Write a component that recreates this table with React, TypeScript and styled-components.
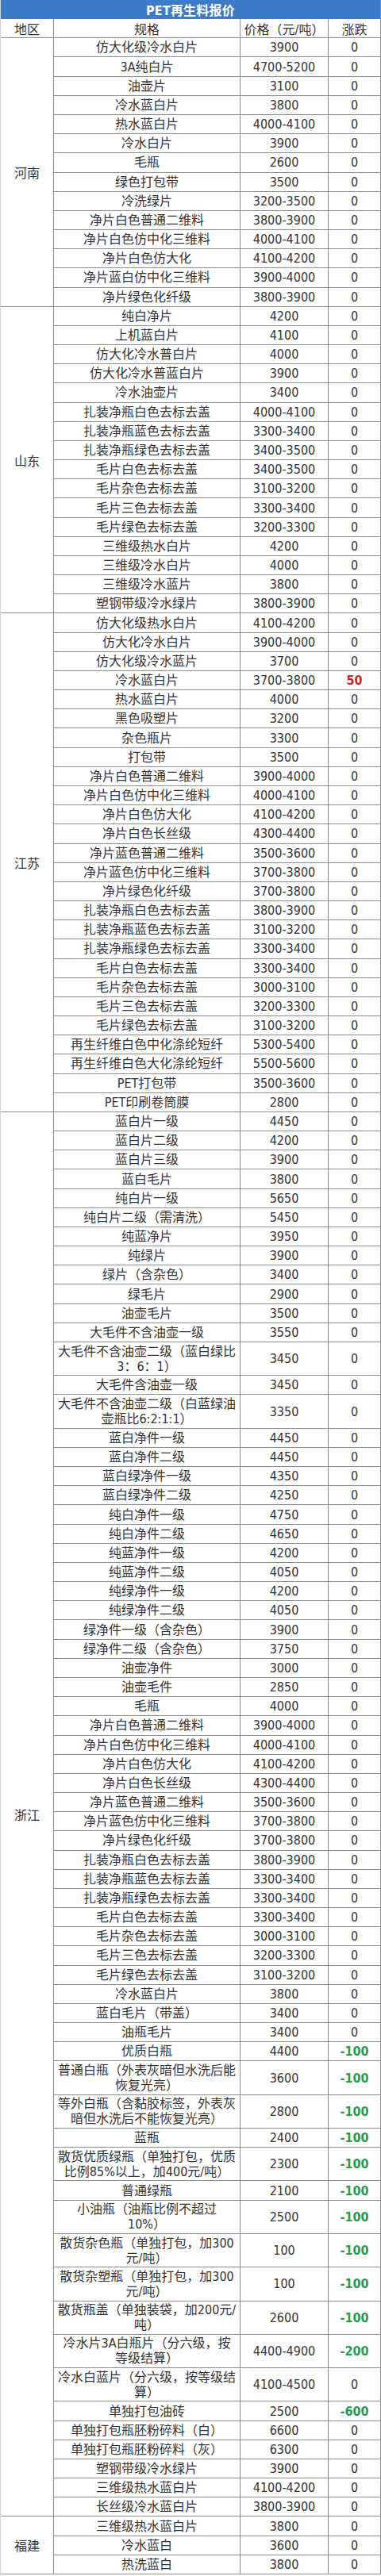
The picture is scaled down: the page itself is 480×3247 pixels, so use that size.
import React from 'react';
import styled, { createGlobalStyle } from 'styled-components';

const Global = createGlobalStyle`
  html, body {
    margin: 0;
    padding: 0;
    background: #ffffff;
  }
  body {
    font-family: "DejaVu Sans Condensed", "Liberation Sans", "Noto Sans CJK SC", sans-serif;
    color: #333333;
  }
  * {
    box-sizing: border-box;
  }
`;

const LINE = '#8e8e8e';

type Trend = 'up' | 'down' | 'flat';
type Item = [string, string, string?];

const regions: { name: string; items: Item[] }[] = [
  {
    name: '河南',
    items: [
      ['仿大化级冷水白片', '3900'],
      ['3A纯白片', '4700-5200'],
      ['油壶片', '3100'],
      ['冷水蓝白片', '3800'],
      ['热水蓝白片', '4000-4100'],
      ['冷水白片', '3900'],
      ['毛瓶', '2600'],
      ['绿色打包带', '3500'],
      ['冷洗绿片', '3200-3500'],
      ['净片白色普通二维料', '3800-3900'],
      ['净片白色仿中化三维料', '4000-4100'],
      ['净片白色仿大化', '4100-4200'],
      ['净片蓝白仿中化三维料', '3900-4000'],
      ['净片绿色化纤级', '3800-3900'],
    ],
  },
  {
    name: '山东',
    items: [
      ['纯白净片', '4200'],
      ['上机蓝白片', '4100'],
      ['仿大化冷水普白片', '4000'],
      ['仿大化冷水普蓝白片', '3900'],
      ['冷水油壶片', '3400'],
      ['扎装净瓶白色去标去盖', '4000-4100'],
      ['扎装净瓶蓝色去标去盖', '3300-3400'],
      ['扎装净瓶绿色去标去盖', '3400-3500'],
      ['毛片白色去标去盖', '3400-3500'],
      ['毛片杂色去标去盖', '3100-3200'],
      ['毛片三色去标去盖', '3300-3400'],
      ['毛片绿色去标去盖', '3200-3300'],
      ['三维级热水白片', '4200'],
      ['三维级冷水白片', '4000'],
      ['三维级冷水蓝片', '3800'],
      ['塑钢带级冷水绿片', '3800-3900'],
    ],
  },
  {
    name: '江苏',
    items: [
      ['仿大化级热水白片', '4100-4200'],
      ['仿大化冷水白片', '3900-4000'],
      ['仿大化级冷水蓝片', '3700'],
      ['冷水蓝白片', '3700-3800', '50'],
      ['热水蓝白片', '4000'],
      ['黑色吸塑片', '3200'],
      ['杂色瓶片', '3300'],
      ['打包带', '3500'],
      ['净片白色普通二维料', '3900-4000'],
      ['净片白色仿中化三维料', '4000-4100'],
      ['净片白色仿大化', '4100-4200'],
      ['净片白色长丝级', '4300-4400'],
      ['净片蓝色普通二维料', '3500-3600'],
      ['净片蓝色仿中化三维料', '3700-3800'],
      ['净片绿色化纤级', '3700-3800'],
      ['扎装净瓶白色去标去盖', '3800-3900'],
      ['扎装净瓶蓝色去标去盖', '3100-3200'],
      ['扎装净瓶绿色去标去盖', '3300-3400'],
      ['毛片白色去标去盖', '3300-3400'],
      ['毛片杂色去标去盖', '3000-3100'],
      ['毛片三色去标去盖', '3200-3300'],
      ['毛片绿色去标去盖', '3100-3200'],
      ['再生纤维白色中化涤纶短纤', '5300-5400'],
      ['再生纤维白色大化涤纶短纤', '5500-5600'],
      ['PET打包带', '3500-3600'],
      ['PET印刷卷筒膜', '2800'],
    ],
  },
  {
    name: '浙江',
    items: [
      ['蓝白片一级', '4450'],
      ['蓝白片二级', '4200'],
      ['蓝白片三级', '3900'],
      ['蓝白毛片', '3800'],
      ['纯白片一级', '5650'],
      ['纯白片二级（需清洗）', '5450'],
      ['纯蓝净片', '3950'],
      ['纯绿片', '3900'],
      ['绿片（含杂色）', '3400'],
      ['绿毛片', '2900'],
      ['油壶毛片', '3500'],
      ['大毛件不含油壶一级', '3550'],
      ['大毛件不含油壶二级（蓝白绿比\n3：6：1）', '3450'],
      ['大毛件含油壶一级', '3450'],
      ['大毛件不含油壶二级（白蓝绿油\n壶瓶比6:2:1:1）', '3350'],
      ['蓝白净件一级', '4450'],
      ['蓝白净件二级', '4450'],
      ['蓝白绿净件一级', '4350'],
      ['蓝白绿净件二级', '4250'],
      ['纯白净件一级', '4750'],
      ['纯白净件二级', '4650'],
      ['纯蓝净件一级', '4200'],
      ['纯蓝净件二级', '4050'],
      ['纯绿净件一级', '4200'],
      ['纯绿净件二级', '4050'],
      ['绿净件一级（含杂色）', '3900'],
      ['绿净件二级（含杂色）', '3750'],
      ['油壶净件', '3000'],
      ['油壶毛件', '2850'],
      ['毛瓶', '4000'],
      ['净片白色普通二维料', '3900-4000'],
      ['净片白色仿中化三维料', '4000-4100'],
      ['净片白色仿大化', '4100-4200'],
      ['净片白色长丝级', '4300-4400'],
      ['净片蓝色普通二维料', '3500-3600'],
      ['净片蓝色仿中化三维料', '3700-3800'],
      ['净片绿色化纤级', '3700-3800'],
      ['扎装净瓶白色去标去盖', '3800-3900'],
      ['扎装净瓶蓝色去标去盖', '3300-3400'],
      ['扎装净瓶绿色去标去盖', '3300-3400'],
      ['毛片白色去标去盖', '3300-3400'],
      ['毛片杂色去标去盖', '3000-3100'],
      ['毛片三色去标去盖', '3200-3300'],
      ['毛片绿色去标去盖', '3100-3200'],
      ['冷水蓝白片', '3800'],
      ['蓝白毛片（带盖）', '3400'],
      ['油瓶毛片', '3400'],
      ['优质白瓶', '4400', '-100'],
      ['普通白瓶（外表灰暗但水洗后能\n恢复光亮）', '3600', '-100'],
      ['等外白瓶（含黏胶标签，外表灰\n暗但水洗后不能恢复光亮）', '2800', '-100'],
      ['蓝瓶', '2400', '-100'],
      ['散货优质绿瓶（单独打包，优质\n比例85%以上，加400元/吨）', '2300', '-100'],
      ['普通绿瓶', '2100', '-100'],
      ['小油瓶（油瓶比例不超过\n10%）', '2500', '-100'],
      ['散货杂色瓶（单独打包，加300\n元/吨）', '100', '-100'],
      ['散货杂塑瓶（单独打包，加300\n元/吨）', '100', '-100'],
      ['散货瓶盖（单独装袋，加200元/\n吨）', '2600', '-100'],
      ['冷水片3A白瓶片（分六级，按\n等级结算）', '4400-4900', '-200'],
      ['冷水白蓝片（分六级，按等级结\n算）', '4100-4500'],
      ['单独打包油砖', '2500', '-600'],
      ['单独打包瓶胚粉碎料（白）', '6600'],
      ['单独打包瓶胚粉碎料（灰）', '6300'],
      ['塑钢带级冷水绿片', '3900'],
      ['三维级热水蓝白片', '4100-4200'],
      ['长丝级冷水蓝白片', '3800-3900'],
    ],
  },
  {
    name: '福建',
    items: [
      ['三维级热水蓝白片', '3800'],
      ['冷水蓝白', '3600'],
      ['热洗蓝白', '3800'],
    ],
  },
];

const Sheet = styled.div`
  width: 480px;
  border-left: 1px solid #d2d2d2;
  border-right: 1px solid ${LINE};
  font-size: 16px;
`;

const TitleBar = styled.div`
  height: 24px;
  background: #3b7bc8;
  color: #ffffff;
  font-weight: bold;
  font-size: 16px;
  display: flex;
  align-items: center;
  justify-content: center;
  letter-spacing: 0.2px;
`;

const HeaderRow = styled.div`
  display: grid;
  grid-template-columns: 67px 235px 111px 1fr;
  height: 24.3px;
  border-bottom: 1px solid ${LINE};
`;

const HeadCell = styled.div`
  display: flex;
  align-items: center;
  justify-content: center;
  white-space: nowrap;
  border-right: 1px solid ${LINE};
  &:last-child {
    border-right: none;
  }
`;

const RegionBlock = styled.div`
  display: grid;
  grid-template-columns: 67px 1fr;
  border-bottom: 1px solid ${LINE};
`;

const RegionName = styled.div`
  display: flex;
  align-items: center;
  justify-content: center;
  border-right: 1px solid ${LINE};
`;

const ItemList = styled.div`
  display: flex;
  flex-direction: column;
`;

const ItemRow = styled.div<{ $tall: boolean }>`
  display: grid;
  grid-template-columns: 235px 111px 1fr;
  height: ${(p) => (p.$tall ? '42.3px' : '24.18px')};
  border-bottom: 1px solid ${LINE};
  &:last-child {
    border-bottom: none;
    height: ${(p) => (p.$tall ? '41.3px' : '23.18px')};
  }
`;

const SpecCell = styled.div`
  display: flex;
  align-items: center;
  justify-content: center;
  text-align: center;
  white-space: pre;
  line-height: 19px;
  padding: 0 2px;
  border-right: 1px solid ${LINE};
`;

const PriceCell = styled.div`
  display: flex;
  align-items: center;
  justify-content: center;
  white-space: nowrap;
  border-right: 1px solid ${LINE};
`;

const trendColor: Record<Trend, string> = {
  up: '#d0212b',
  down: '#1f9d50',
  flat: '#333333',
};

const ChangeCell = styled.div<{ $trend: Trend }>`
  display: flex;
  align-items: center;
  justify-content: center;
  white-space: nowrap;
  color: ${(p) => trendColor[p.$trend]};
  font-weight: ${(p) => (p.$trend === 'flat' ? 'normal' : 'bold')};
`;

const trendOf = (v: string): Trend => {
  if (v.startsWith('-')) return 'down';
  if (v === '0') return 'flat';
  return 'up';
};

const App = () => {
  return (
    <>
      <Global />
      <Sheet>
        <TitleBar>PET再生料报价</TitleBar>
        <HeaderRow>
          <HeadCell>地区</HeadCell>
          <HeadCell>规格</HeadCell>
          <HeadCell>价格（元/吨）</HeadCell>
          <HeadCell>涨跌</HeadCell>
        </HeaderRow>
        {regions.map((region) => (
          <RegionBlock key={region.name}>
            <RegionName>{region.name}</RegionName>
            <ItemList>
              {region.items.map(([spec, price, change = '0'], i) => (
                <ItemRow key={i} $tall={spec.includes('\n')}>
                  <SpecCell>{spec}</SpecCell>
                  <PriceCell>{price}</PriceCell>
                  <ChangeCell $trend={trendOf(change)}>{change}</ChangeCell>
                </ItemRow>
              ))}
            </ItemList>
          </RegionBlock>
        ))}
      </Sheet>
    </>
  );
};

export default App;
